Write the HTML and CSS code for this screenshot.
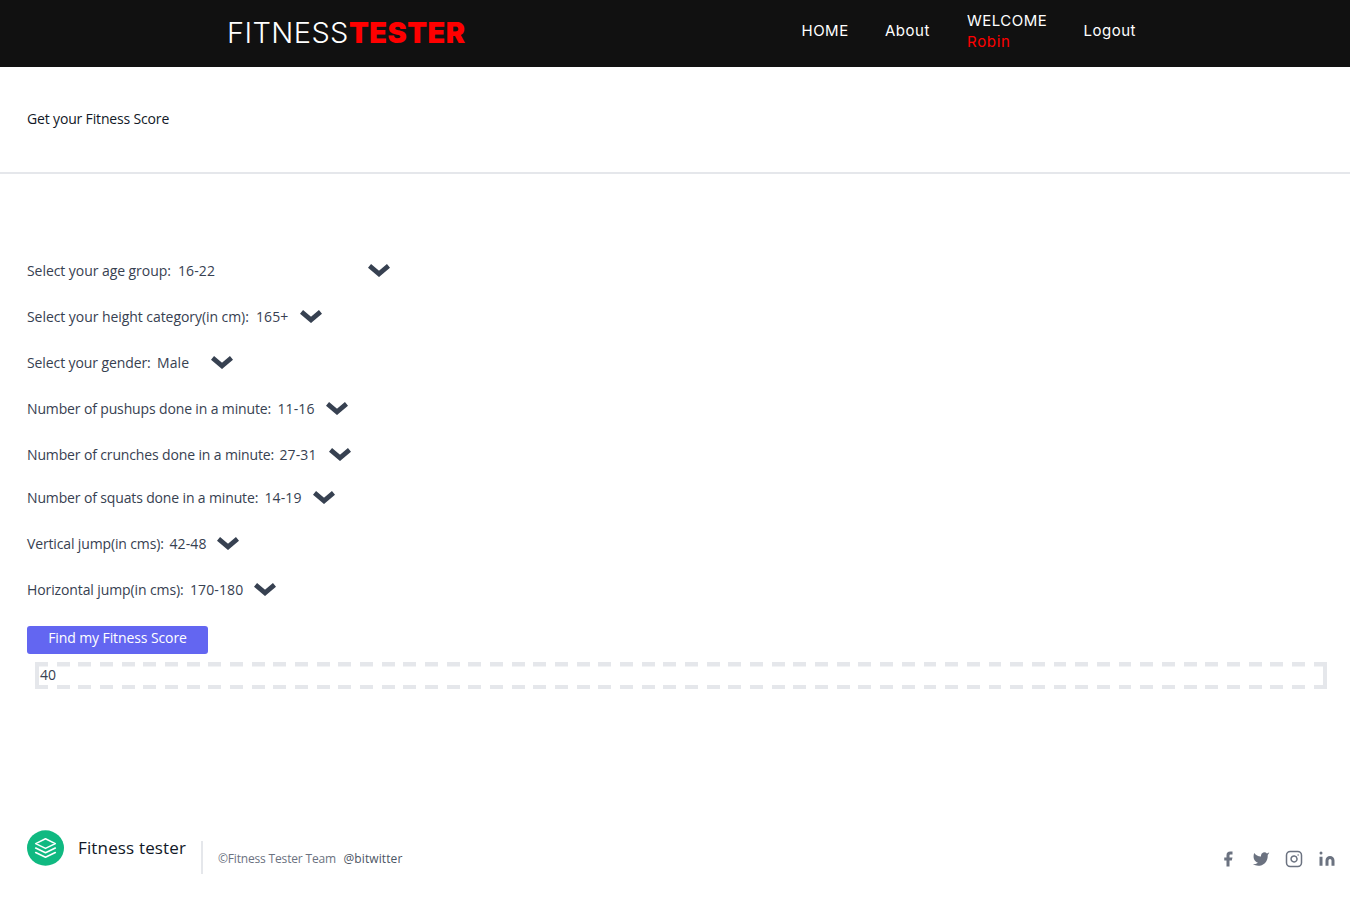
FILE: index.html
```html
<!DOCTYPE html>
<html lang="en">
<head>
<meta charset="utf-8">
<title>Fitness Tester</title>
<link rel="stylesheet" href="styles.css">
</head>
<body>
<svg class="defs" aria-hidden="true"><symbol id="chevron" viewBox="0 0 22 13"><path d="M1.500 1.900 11 9.900l9.500-8" fill="none" stroke="#374151" stroke-width="4.800"/></symbol></svg>
<header class="topbar">
  <a class="brand"><span class="brand-light">FITNESS</span><span class="brand-bold">TESTER</span></a>
  <nav class="nav">
    <a class="nav-home">HOME</a>
    <a class="nav-about">About</a>
    <a class="nav-user"><span class="welcome">WELCOME</span><span class="user-name">Robin</span></a>
    <a class="nav-logout">Logout</a>
  </nav>
</header>
<section class="intro"><p class="intro-text">Get your Fitness Score</p></section>
<main class="form">
  <div class="field age"><label>Select your age group:</label><span class="value">16-22</span><svg class="chevron"><use href="#chevron"/></svg></div>
  <div class="field height"><label>Select your height category(in cm):</label><span class="value">165+</span><svg class="chevron"><use href="#chevron"/></svg></div>
  <div class="field gender"><label>Select your gender:</label><span class="value">Male</span><svg class="chevron"><use href="#chevron"/></svg></div>
  <div class="field pushups"><label>Number of pushups done in a minute:</label><span class="value">11-16</span><svg class="chevron"><use href="#chevron"/></svg></div>
  <div class="field crunches"><label>Number of crunches done in a minute:</label><span class="value">27-31</span><svg class="chevron"><use href="#chevron"/></svg></div>
  <div class="field squats"><label>Number of squats done in a minute:</label><span class="value">14-19</span><svg class="chevron"><use href="#chevron"/></svg></div>
  <div class="field vertical"><label>Vertical jump(in cms):</label><span class="value">42-48</span><svg class="chevron"><use href="#chevron"/></svg></div>
  <div class="field horizontal"><label>Horizontal jump(in cms):</label><span class="value">170-180</span><svg class="chevron"><use href="#chevron"/></svg></div>
  <button class="submit">Find my Fitness Score</button>
  <div class="result">40</div>
</main>
<footer class="footer">
  <svg class="logo" viewBox="0 0 37 36"><ellipse cx="18.500" cy="18" rx="18.500" ry="17.700" fill="#10b981"/><g fill="none" stroke="#fff" stroke-width="1.600" stroke-linecap="round" stroke-linejoin="round"><path d="M18.500 8.800 28.300 13.600 18.500 18.400 8.700 13.600Z"/><path d="m8.700 18 9.800 4.700 9.800-4.700M8.700 22.500l9.800 4.700 9.800-4.700"/></g></svg>
  <span class="footer-name">Fitness tester</span>
  <p class="copyright"><span class="team">©Fitness Tester Team</span><a class="handle">@bitwitter</a></p>
  <div class="social">
    <svg viewBox="0 0 24 24"><path fill="currentColor" d="M18 2h-3a5 5 0 0 0-5 5v3H7v4h3v8h4v-8h3l1-4h-4V7a1 1 0 0 1 1-1h3z"/></svg>
    <svg viewBox="0 0 24 24"><path fill="currentColor" d="M23 3a10.900 10.900 0 0 1-3.140 1.530 4.480 4.480 0 0 0-7.860 3v1A10.660 10.660 0 0 1 3 4s-4 9 5 13a11.640 11.640 0 0 1-7 2c9 5 20 0 20-11.500a4.500 4.500 0 0 0-.08-.83A7.720 7.720 0 0 0 23 3z"/></svg>
    <svg viewBox="0 0 24 24" fill="none" stroke="currentColor" stroke-width="2" stroke-linecap="round"><rect x="2" y="2" width="20" height="20" rx="5"/><path d="M16 11.370A4 4 0 1 1 12.630 8 4 4 0 0 1 16 11.370zm1.500-4.870h.01"/></svg>
    <svg viewBox="0 0 24 24"><path fill="currentColor" d="M16 8a6 6 0 0 1 6 6v7h-4v-7a2 2 0 0 0-4 0v7h-4v-7a6 6 0 0 1 6-6zM2 9h4v12H2z"/><circle cx="4" cy="4" r="2" fill="currentColor"/></svg>
  </div>
</footer>
</body>
</html>
```
FILE: styles.css
```css
* { box-sizing: border-box; }
body {
  margin: 0;
  height: 897px;
  overflow: hidden;
  background: #fff;
  font-family: "Open Sans", "Noto Sans", sans-serif;
  font-size: 14px;
  line-height: 20px;
  color: #374151;
  white-space: nowrap;
}
p { margin: 0; }
.defs { display: none; }
.topbar {
  display: flex;
  height: 67px;
  background: #111;
  color: #fff;
  font-family: Inter, sans-serif;
}
.brand {
  display: flex;
  flex: 0 0 801.500px;
  padding: 13px 0 0 227px;
  font-size: 29px;
  line-height: 40px;
}
.brand-light { width: 122px; font-weight: 300; letter-spacing: 0.4px; }
.brand-bold { color: #f00; font-weight: 900; letter-spacing: 0.4px; }
.nav {
  display: grid;
  grid-template-columns: 83.500px 82px 116.500px auto;
  padding-top: 10px;
  font-size: 15px;
  font-weight: 400;
  letter-spacing: 0.5px;
  line-height: 21px;
}
.nav-home, .nav-about, .nav-logout { padding-top: 10px; }
.nav-user { display: flex; flex-direction: column; }
.user-name { color: #f00; letter-spacing: 0.7px; }
.intro {
  height: 107px;
  padding: 42px 27px 0;
  border-bottom: 2px solid #e5e7eb;
}
.intro-text { color: #111827; letter-spacing: -0.16px; }
.form { height: 656px; padding: 87px 23px 0 27px; }
.field {
  display: grid;
  align-items: center;
  height: 20px;
  margin-bottom: 26px;
  letter-spacing: -0.14px;
}
.value { letter-spacing: 0.1px; }
.chevron { width: 22px; height: 13px; margin: -2px 0 0 -0.500px; }
.age { grid-template-columns: 151px 190px 22px; letter-spacing: -0.06px; }
.height { grid-template-columns: 229px 44.500px 22px; letter-spacing: -0.06px; }
.gender { grid-template-columns: 130px 54px 22px; letter-spacing: -0.1px; }
.pushups { grid-template-columns: 250.500px 49px 22px; }
.crunches { grid-template-columns: 252.500px 49.500px 22px; margin-bottom: 23px; }
.squats { grid-template-columns: 237.500px 49px 22px; }
.vertical { grid-template-columns: 142.500px 48px 22px; }
.horizontal { grid-template-columns: 163px 64.500px 22px; letter-spacing: -0.11px; }
.submit {
  display: block;
  width: 181px;
  height: 28px;
  margin-top: -0.500px;
  padding: 0 0 3px;
  border: 0;
  border-radius: 3px;
  background: #6366f1;
  color: #fff;
  font: inherit;
  letter-spacing: -0.1px;
}
.result {
  height: 27px;
  margin: 8.500px 0 0 8px;
  padding: 3px 5px 3px 1px;
  border: solid #e5e7eb;
  border-width: 0 4.500px;
  background:
    repeating-linear-gradient(90deg, #e5e7eb 0 9px, transparent 9px 17.700px, #e5e7eb 17.700px 21.670px) 0 0 / 100% 4.500px no-repeat,
    repeating-linear-gradient(90deg, #e5e7eb 0 9px, transparent 9px 17.700px, #e5e7eb 17.700px 21.670px) 0 100% / 100% 4.500px no-repeat;
}
.footer { display: flex; height: 67px; padding: 0 14.500px 0 26.500px; }
.logo { width: 37px; height: 36px; }
.footer-name {
  width: 137.500px;
  margin-left: 14.500px;
  padding-top: 5px;
  color: #111827;
  font-size: 17px;
  font-weight: 500;
  letter-spacing: 0.15px;
  line-height: 26px;
}
.copyright {
  display: flex;
  height: 33px;
  margin: 11px 0 0 -14.500px;
  padding: 8px 0 0 15px;
  border-left: 2px solid #e5e7eb;
  color: #6b7280;
  font-size: 12px;
  line-height: 20px;
}
.team { width: 125.500px; letter-spacing: -0.17px; }
.handle { color: #4b5563; letter-spacing: 0.1px; }
.social {
  display: flex;
  gap: 14.700px;
  margin-left: auto;
  padding-top: 20px;
  color: #6b7280;
}
.social svg { width: 18px; height: 18px; }
```
